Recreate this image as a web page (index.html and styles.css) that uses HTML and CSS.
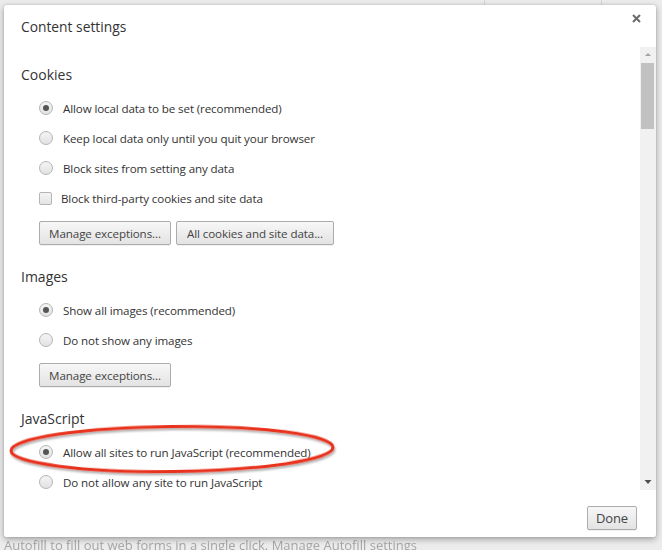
FILE: index.html
```html
<!DOCTYPE html>
<html>
<head>
<meta charset="utf-8">
<link rel="stylesheet" href="styles.css">
</head>
<body>
<div class="page">
  <div class="page-lines"></div>
  <p class="page-text">Autofill to fill out web forms in a single click. Manage Autofill settings</p>
</div>
<div class="dialog">
  <div class="dlg-head">
    <h1 class="dlg-title">Content settings</h1>
    <svg class="close" width="9" height="9" viewBox="0 0 9 9"><path d="M1 1 L8 8 M8 1 L1 8" stroke="#6b6b6b" stroke-width="2" stroke-linecap="butt"/></svg>
  </div>
  <div class="dlg-body">
    <div class="content">
      <section class="sect">
        <h2 class="sect-title">Cookies</h2>
        <label class="row"><span class="radio checked"></span><span class="txt">Allow local data to be set (recommended)</span></label>
        <label class="row"><span class="radio"></span><span class="txt">Keep local data only until you quit your browser</span></label>
        <label class="row"><span class="radio"></span><span class="txt">Block sites from setting any data</span></label>
        <label class="row"><span class="check"></span><span class="txt">Block third-party cookies and site data</span></label>
        <div class="btns">
          <button class="btn w132">Manage exceptions...</button>
          <button class="btn w158">All cookies and site data...</button>
        </div>
      </section>
      <section class="sect">
        <h2 class="sect-title">Images</h2>
        <label class="row"><span class="radio checked"></span><span class="txt">Show all images (recommended)</span></label>
        <label class="row"><span class="radio"></span><span class="txt">Do not show any images</span></label>
        <div class="btns">
          <button class="btn w132">Manage exceptions...</button>
        </div>
      </section>
      <section class="sect">
        <h2 class="sect-title">JavaScript</h2>
        <label class="row"><span class="radio checked"></span><span class="txt">Allow all sites to run JavaScript (recommended)</span></label>
        <label class="row"><span class="radio"></span><span class="txt">Do not allow any site to run JavaScript</span></label>
      </section>
      <svg class="mark" width="340" height="60" viewBox="0 0 340 60">
        <defs>
          <filter id="sh" x="-10%" y="-30%" width="120%" height="160%">
            <feDropShadow dx="1" dy="2" stdDeviation="1.2" flood-color="#000" flood-opacity="0.35"/>
          </filter>
        </defs>
        <ellipse cx="166" cy="28" rx="161" ry="22.5" transform="rotate(-0.6 166 28)" fill="none" stroke="#e8321e" stroke-width="3" filter="url(#sh)"/>
      </svg>
    </div>
    <div class="scrollbar">
      <svg class="arr" width="16" height="15" viewBox="0 0 16 15"><path d="M5 9 L11 9 L8 6 Z" fill="#a3a3a3"/></svg>
      <div class="thumb"></div>
      <div class="track"></div>
      <svg class="arr" width="16" height="15" viewBox="0 0 16 15"><path d="M4.5 5 L11.5 5 L8 9 Z" fill="#505050"/></svg>
    </div>
  </div>
  <div class="dlg-foot">
    <button class="btn done">Done</button>
  </div>
</div>
</body>
</html>
```

FILE: styles.css
```css
html, body {
  margin: 0;
  padding: 0;
}
body {
  width: 662px;
  height: 550px;
  overflow: hidden;
  background: #ececec;
  font-family: "Open Sans", "Noto Sans", sans-serif;
  color: #333;
  position: relative;
}
.page {
  width: 662px;
  height: 550px;
  position: relative;
}
.page-lines {
  position: absolute;
  left: 484px;
  top: 0;
  width: 116px;
  height: 6px;
  border-left: 1px solid #d6d6d6;
  border-right: 1px solid #d6d6d6;
}
.page-text {
  position: absolute;
  left: 4px;
  top: 536px;
  margin: 0;
  font-size: 13px;
  color: #a6a6a6;
  white-space: nowrap;
  filter: blur(0.3px);
}
.dialog {
  position: absolute;
  left: 4px;
  top: 5px;
  width: 652px;
  height: 532px;
  background: #fff;
  border-radius: 2px;
  box-shadow: 0 2px 6px rgba(0,0,0,0.35), 0 0 1px rgba(0,0,0,0.3);
  display: flex;
  flex-direction: column;
}
.dlg-head {
  height: 42px;
  display: flex;
  align-items: flex-start;
  justify-content: space-between;
  padding: 0 15px 0 17px;
}
.dlg-title {
  margin: 12px 0 0;
  font-size: 13.8px;
  font-weight: 400;
  line-height: 20px;
  color: #333;
}
.close {
  margin-top: 9px;
}
.dlg-body {
  height: 443px;
  display: flex;
}
.content {
  flex: 1;
  position: relative;
  overflow: hidden;
  padding: 18px 0 0 17px;
}
.sect {
  margin-bottom: 22px;
}
.sect-title {
  margin: 0 0 8px;
  font-size: 14px;
  font-weight: 400;
  line-height: 20px;
  color: #333;
}
.row {
  display: flex;
  align-items: center;
  height: 30px;
  padding-left: 18px;
  font-size: 11.6px;
  letter-spacing: -0.12px;
  color: #333;
}
.radio {
  width: 14px;
  height: 14px;
  box-sizing: border-box;
  border-radius: 50%;
  border: 1px solid #b5b5b5;
  background: linear-gradient(#f4f4f4, #e2e2e2);
  margin-right: 10px;
  display: flex;
  align-items: center;
  justify-content: center;
  flex-shrink: 0;
}
.radio.checked::after {
  content: "";
  width: 6px;
  height: 6px;
  border-radius: 50%;
  background: #555;
}
.check {
  width: 13px;
  height: 13px;
  box-sizing: border-box;
  border: 1px solid #b5b5b5;
  border-radius: 2px;
  background: linear-gradient(#f4f4f4, #e4e4e4);
  margin-right: 9px;
  flex-shrink: 0;
}
.btns {
  display: flex;
  gap: 5px;
  margin: 8px 0 0 18px;
}
.btn {
  height: 24px;
  box-sizing: border-box;
  border: 1px solid #acacac;
  border-radius: 2px;
  background: linear-gradient(#f7f7f7, #e3e3e3);
  font-family: inherit;
  font-size: 11.6px;
  letter-spacing: -0.1px;
  color: #444;
  padding: 0;
  box-shadow: 0 1px 0 rgba(0,0,0,0.06);
}
.w132 { width: 132px; }
.w158 { width: 158px; }
.mark {
  position: absolute;
  left: 2px;
  top: 374px;
}
.scrollbar {
  width: 16px;
  background: #f1f1f1;
  display: flex;
  flex-direction: column;
}
.arr {
  display: block;
  height: 15px;
}
.thumb {
  margin: 1px 2px 0 1px;
  height: 66px;
  background: #c1c1c1;
}
.track {
  flex: 1;
}
.dlg-foot {
  flex: 1;
  display: flex;
  justify-content: flex-end;
  align-items: flex-start;
  padding: 16px 19px 0 0;
}
.done {
  width: 50px;
  font-size: 13px;
}
```
